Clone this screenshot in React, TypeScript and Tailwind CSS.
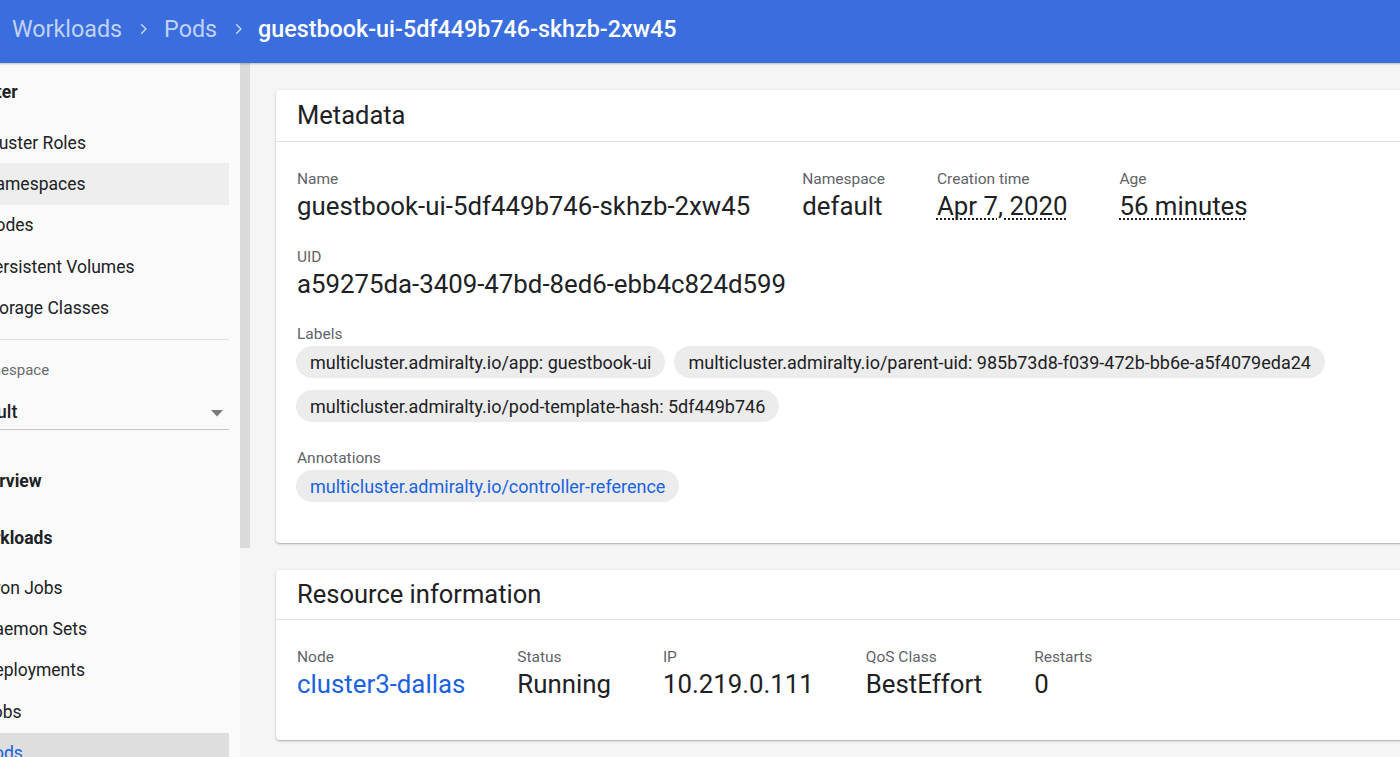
import React from "react";

const font = { fontFamily: "Roboto, 'Noto Sans', sans-serif" };

function Field({ label, children }: { label: string; children: React.ReactNode }) {
  return (
    <div className="flex flex-col">
      <div className="h-[18px] text-[15.5px] leading-[18px] text-[#5f6368]">{label}</div>
      <div className="mt-[3px] mb-[1px] h-[30px] text-[25.8px] leading-[30px] text-[#202124] whitespace-nowrap">{children}</div>
    </div>
  );
}

function Chip({ children, link }: { children: React.ReactNode; link?: boolean }) {
  return (
    <span
      className={
        "inline-flex h-[32px] items-center rounded-full bg-[#ececec] px-[14px] text-[18px] whitespace-nowrap " +
        (link ? "text-[#1a62e0]" : "text-[#202124]")
      }
    >
      {children}
    </span>
  );
}

function NavItem({ label, active, selected }: { label: string; active?: boolean; selected?: boolean }) {
  return (
    <div
      className={
        "flex h-[41.4px] items-center pl-[14px] text-[17.5px] " +
        (selected ? "bg-[#dedede] text-[#1a62e0] " : active ? "bg-[#eeeeee] text-[#202124] " : "text-[#202124] ")
      }
    >
      {label}
    </div>
  );
}

function Chevron({ className }: { className: string }) {
  return (
    <svg className={className} width="16" height="16" viewBox="0 0 24 24">
      <path d="M8.6 5.6 10 4.2l7.8 7.8-7.8 7.8-1.4-1.4 6.4-6.4z" fill="rgba(255,255,255,0.75)" />
    </svg>
  );
}

export default function App() {
  return (
    <div className="flex h-[757px] w-[1400px] flex-col overflow-hidden bg-[#f5f5f5]" style={font}>
      {/* Top bar */}
      <div className="z-10 flex h-[63px] shrink-0 items-center bg-[#3a6edf] pb-[5px] pl-[12px] text-[23.3px] shadow-[0_1px_2px_rgba(0,0,0,0.25)]">
        <span className="text-white/70">Workloads</span>
        <Chevron className="mx-[13px]" />
        <span className="text-white/70">Pods</span>
        <Chevron className="ml-[13px] mr-[12px]" />
        <span className="font-medium text-white">guestbook-ui-5df449b746-skhzb-2xw45</span>
      </div>

      <div className="flex min-h-0 flex-1">
        {/* Sidebar */}
        <div className="flex w-[250px] shrink-0">
          <div className="w-[240px] overflow-hidden bg-[#fafafa] pt-[1px]">
            <div className="-ml-[31px] w-[260px]">
              <div className="-ml-[8px] flex h-[58px] items-center pb-[1px] text-[17.5px] font-bold text-[#202124]">Cluster</div>
              <NavItem label="Cluster Roles" />
              <NavItem label="Namespaces" active />
              <NavItem label="Nodes" />
              <NavItem label="Persistent Volumes" />
              <NavItem label="Storage Classes" />
              <div className="mt-[10px] h-px bg-[#e0e0e0]" />
              <div className="mt-[21px] h-[18px] text-[15px] leading-[18px] text-[#6b6b6b]">Namespace</div>
              <div className="relative mt-[17px] flex h-[34px] items-center border-b border-[#c4c4c4] pb-[2px] text-[18px] font-medium text-[#202124]">
                <span className="-ml-[8px]">default</span>
                <svg className="absolute right-[6px] top-[14px]" width="12" height="7" viewBox="0 0 12 7">
                  <path d="M0 0h12L6 6.5z" fill="#7a7a7a" />
                </svg>
              </div>
              <div className="mt-[26px] flex h-[50px] items-center text-[17.5px] font-bold text-[#202124]">Overview</div>
              <div className="mt-[4px] flex h-[57px] items-center text-[17.5px] font-bold text-[#202124]">Workloads</div>
              <NavItem label="Cron Jobs" />
              <NavItem label="Daemon Sets" />
              <NavItem label="Deployments" />
              <NavItem label="Jobs" />
              <NavItem label="Pods" selected />
            </div>
          </div>
          <div className="h-[485px] w-[10px] bg-[#dadada]" />
        </div>

        {/* Main */}
        <div className="min-w-0 flex-1 overflow-hidden pl-[26px] pt-[27px]">
          <div className="flex w-[1200px] flex-col gap-[27px]">
            {/* Metadata card */}
            <div className="rounded-[4px] bg-white shadow-[0_1px_3px_rgba(0,0,0,0.22),0_1px_1px_rgba(0,0,0,0.12)]">
              <div className="flex h-[52px] items-center border-b border-[#e0e0e0] pl-[21px] text-[25.5px] text-[#202124]">
                Metadata
              </div>
              <div className="flex flex-col pb-[40px] pl-[21px] pt-[28px]">
                <div className="flex gap-[52px]">
                  <Field label="Name">guestbook-ui-5df449b746-skhzb-2xw45</Field>
                  <Field label="Namespace">default</Field>
                  <Field label="Creation time">
                    <span className="underline decoration-dotted decoration-[2px] underline-offset-[3px]">Apr 7, 2020</span>
                  </Field>
                  <Field label="Age">
                    <span className="underline decoration-dotted decoration-[2px] underline-offset-[3px]">56 minutes</span>
                  </Field>
                </div>
                <div className="mt-[26px]">
                  <Field label="UID">a59275da-3409-47bd-8ed6-ebb4c824d599</Field>
                </div>
                <div className="mt-[25px] flex flex-col">
                  <div className="h-[18px] text-[15.5px] leading-[18px] text-[#5f6368]">Labels</div>
                  <div className="mt-[3px] mb-[1px] flex w-[1060px] flex-wrap gap-x-[9px] gap-y-[12px] -ml-px">
                    <Chip>multicluster.admiralty.io/app: guestbook-ui</Chip>
                    <Chip>multicluster.admiralty.io/parent-uid: 985b73d8-f039-472b-bb6e-a5f4079eda24</Chip>
                    <Chip>multicluster.admiralty.io/pod-template-hash: 5df449b746</Chip>
                  </div>
                </div>
                <div className="mt-[26px] flex flex-col">
                  <div className="h-[18px] text-[15.5px] leading-[18px] text-[#5f6368]">Annotations</div>
                  <div className="mt-[3px] mb-[1px] flex -ml-px">
                    <Chip link>multicluster.admiralty.io/controller-reference</Chip>
                  </div>
                </div>
              </div>
            </div>

            {/* Resource information card */}
            <div className="rounded-[4px] bg-white shadow-[0_1px_3px_rgba(0,0,0,0.22),0_1px_1px_rgba(0,0,0,0.12)]">
              <div className="flex h-[50px] items-center border-b border-[#e0e0e0] pl-[21px] text-[25.5px] text-[#202124]">
                Resource information
              </div>
              <div className="flex gap-[52px] pb-[40px] pl-[21px] pt-[28px]">
                <Field label="Node">
                  <span className="text-[#1a62e0]">cluster3-dallas</span>
                </Field>
                <Field label="Status">Running</Field>
                <Field label="IP">10.219.0.111</Field>
                <Field label="QoS Class">BestEffort</Field>
                <Field label="Restarts">0</Field>
              </div>
            </div>
          </div>
        </div>
      </div>
    </div>
  );
}
